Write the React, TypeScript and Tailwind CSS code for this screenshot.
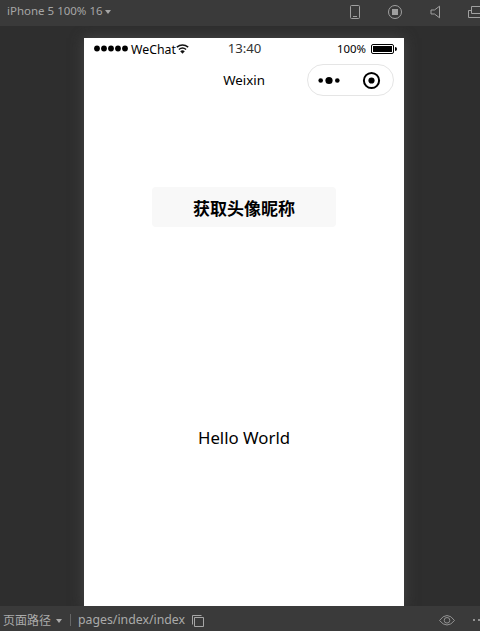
function Caret({ className = '' }: { className?: string }) {
  return (
    <svg className={`shrink-0 ${className}`} width="6" height="4" viewBox="0 0 6 4" fill="currentColor">
      <path d="M0 0h6L3 4z" />
    </svg>
  );
}

function Toolbar() {
  return (
    <header className="flex h-[26px] w-[500px] shrink-0 items-start bg-[#3a3a3a] text-[#a6a6a6]">
      <div className="flex h-[23px] w-[343px] items-center pl-[7px]">
        <span className="w-[95px] whitespace-nowrap pb-[2px] text-[11.5px] leading-none">iPhone 5 100% 16</span>
        <Caret className="ml-[3px] mt-px" />
      </div>
      <svg width="157" height="26" viewBox="343 0 157 26" fill="none" stroke="#a0a0a0" strokeWidth="1">
        <rect x="350.5" y="5.5" width="9" height="13" rx="1" />
        <path d="M353 16.500h4" />
        <circle cx="395" cy="12" r="6.500" />
        <rect x="392" y="9" width="6" height="6" fill="#a0a0a0" stroke="none" />
        <path d="M439.500 6.200v11.600l-5-3.800h-3.500v-4h3.500z" />
        <path d="M471.500 6.500h14v7h-14zM471.500 10.500h-3v7h12v-4" />
      </svg>
    </header>
  );
}

function StatusBar() {
  return (
    <div className="grid h-[21px] grid-cols-[140px_40px_1fr] items-center text-black">
      <div className="flex items-center pl-[10px]">
        <svg width="34" height="7" viewBox="0 0 34 7" fill="#000">
          <circle cx="3" cy="3.500" r="2.900" />
          <circle cx="10" cy="3.500" r="2.900" />
          <circle cx="17" cy="3.500" r="2.900" />
          <circle cx="24" cy="3.500" r="2.900" />
          <circle cx="31" cy="3.500" r="2.900" />
        </svg>
        <span className="ml-[3px] w-[45px] whitespace-nowrap pt-px text-[12.3px] leading-[13px]">WeChat</span>
        <svg width="13" height="10" viewBox="0 0 13 10" fill="none" stroke="#111" strokeWidth="1.500">
          <path d="M.8 3.200Q6.500-1.200 12.200 3.200M2.900 5.500Q6.500 2.700 10.100 5.500" />
          <path d="M4.200 7.200Q6.500 5.400 8.800 7.200L6.500 9.800z" fill="#111" stroke="none" />
        </svg>
      </div>
      <span className="whitespace-nowrap pl-px text-center text-[13.2px] leading-none text-[#333]">13:40</span>
      <div className="flex items-center justify-end pr-[7px]">
        <span className="whitespace-nowrap text-[11.4px] leading-none">100%</span>
        <svg className="ml-[5px]" width="26" height="10" viewBox="0 0 26 10">
          <rect x=".5" y=".5" width="22" height="9" rx="1.500" fill="none" stroke="#000" />
          <rect x="2" y="2" width="19" height="6" fill="#000" />
          <path d="M24 3q2 0 2 2t-2 2z" fill="#000" />
        </svg>
      </div>
    </div>
  );
}

function NavBar() {
  return (
    <div className="grid h-[43px] grid-cols-[100px_120px_1fr] items-center">
      <span />
      <span className="whitespace-nowrap text-center text-[13.3px] leading-none text-black">Weixin</span>
      <div className="mb-[2px] ml-[3px] flex h-8 w-[87px] items-center rounded-full border border-[#e5e5e5]">
        <svg width="85" height="30" viewBox="308 65 85 30">
          <circle cx="320.700" cy="80.500" r="2.300" />
          <circle cx="329" cy="80.500" r="3.600" />
          <circle cx="337.300" cy="80.500" r="2.300" />
          <circle cx="371.500" cy="80.500" r="7.600" fill="none" stroke="#000" strokeWidth="2" />
          <circle cx="371.500" cy="80.500" r="3.100" />
        </svg>
      </div>
    </div>
  );
}

function PathBar() {
  return (
    <footer className="flex h-[25px] w-[500px] shrink-0 items-center bg-[#3a3a3a] pt-[4px] text-[12px] leading-none text-[#aaa]">
      <span className="ml-[3px] w-[49px] whitespace-nowrap">页面路径</span>
      <Caret className="ml-1" />
      <span className="mb-px ml-2 h-3 w-px bg-[#666]" />
      <span className="ml-[7px] w-[108px] whitespace-nowrap text-[12.3px]">pages/index/index</span>
      <svg className="ml-[6px]" width="12" height="12" viewBox="0 0 12 12" fill="none" stroke="#a6a6a6">
        <path d="M2.500 2.500h9v9h-9zM.5 9.500V.5h9" />
      </svg>
      <svg className="ml-[235px]" width="46" height="13" viewBox="439 615 46 13" fill="none" stroke="#929292">
        <path d="M439.500 621.500Q443 616.500 447 616.500T454.500 621.500Q451 626 447 626T439.500 621.500z" />
        <circle cx="447" cy="621.300" r="2.800" />
        <path d="M473 620h2v2h-2zM478 620h2v2h-2z" fill="#929292" stroke="none" />
      </svg>
    </footer>
  );
}

export default function App() {
  return (
    <div className="flex h-[631px] w-[480px] flex-col overflow-hidden bg-[#2e2e2e] font-['Noto_Sans','Noto_Sans_CJK_SC',sans-serif]">
      <Toolbar />
      <main className="flex flex-1 overflow-hidden pl-[84px] pt-3">
        <section className="flex w-[320px] flex-col bg-white shadow-[0_0_12px_0_#464646]">
          <StatusBar />
          <NavBar />
          <div className="flex flex-col items-center">
            <button className="mt-[85px] h-10 w-[184px] rounded-[4px] bg-[#f8f8f8] pt-[2px] text-[17px] font-bold leading-none text-black">
              获取头像昵称
            </button>
            <p className="mt-[199px] whitespace-nowrap text-[16.8px] leading-6 text-black">Hello World</p>
          </div>
        </section>
      </main>
      <PathBar />
    </div>
  );
}
